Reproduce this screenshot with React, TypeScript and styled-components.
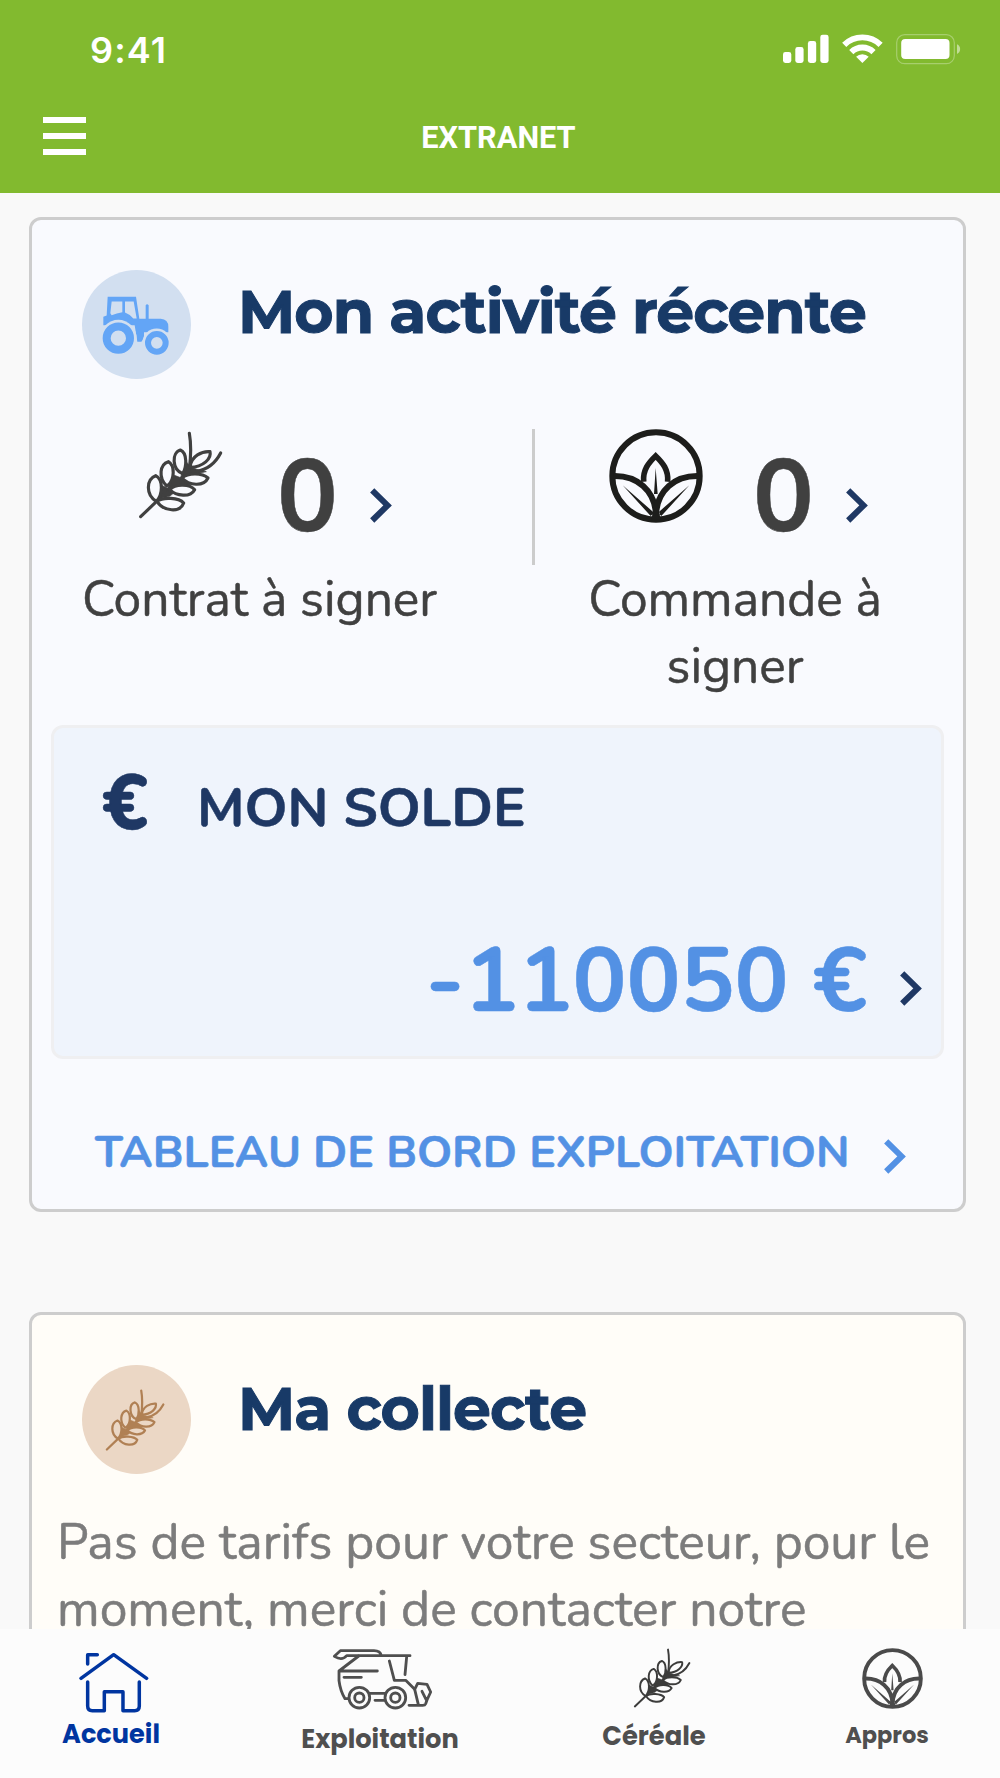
import React from "react";
import styled, { createGlobalStyle } from "styled-components";

const GlobalStyle = createGlobalStyle`
  *, *::before, *::after { box-sizing: border-box; }
  body { margin: 0; background: #f9f9f9; }
  svg { display: block; flex: none; }
`;

const rounded = `Nunito, Lato, sans-serif`;
const heading = `Montserrat, Inter, sans-serif`;
const label = `Poppins, Inter, sans-serif`;

const navy = "#1f3864";
const blue = "#5391e4";

const Screen = styled.div`
  width: 1000px;
  height: 1778px;
  display: flex;
  flex-direction: column;
  overflow: hidden;
  background: #f9f9f9;
`;

const Header = styled.header`
  flex: none;
  height: 192.5px;
  background: #82ba2f;
  color: #fff;
`;

const StatusBar = styled.div`
  display: flex;
  justify-content: space-between;
  height: 88px;
  padding: 29px 38px 0 90px;
`;

const Time = styled.span`
  font: 600 36px/43px Inter, sans-serif;
  letter-spacing: 1.1px;
`;

const StatusIcons = styled.div`
  display: flex;
  gap: 13px;
  padding-top: 5px;
`;

const AppBar = styled.div`
  display: grid;
  grid-template-columns: 1fr auto 1fr;
  height: 104px;
  padding: 29px 43px 0;
`;

const MenuButton = styled.button`
  display: flex;
  flex-direction: column;
  gap: 10px;
  width: 43px;
  padding: 0;
  border: 0;
  background: none;
`;

const MenuLine = styled.span`
  width: 43px;
  height: 6px;
  background: #fff;
`;

const AppTitle = styled.h1`
  margin: 3px 3px 0 0;
  font: 700 30.7px/36px Roboto, sans-serif;
`;

const Content = styled.main`
  flex: 1;
  min-height: 0;
  overflow: hidden;
  padding: 24.5px 34px 0 29px;
`;

const Card = styled.section<{ $bg: string; $height: number }>`
  height: ${(p) => p.$height}px;
  margin-bottom: 100px;
  border: 3px solid #cdcdcd;
  border-radius: 12px;
  background: ${(p) => p.$bg};
  -webkit-text-stroke: 0.5px currentColor;
`;

const CardHead = styled.div`
  display: flex;
  align-items: flex-start;
  height: 209px;
  padding: 50px 0 0 50px;
`;

const Badge = styled.div<{ $bg: string }>`
  flex: none;
  display: flex;
  width: 109px;
  height: 109px;
  border-radius: 50%;
  background: ${(p) => p.$bg};
`;

const CardTitle = styled.h2<{ $top: number }>`
  margin: ${(p) => p.$top}px 0 0 47px;
  font: 700 60px/70px ${heading};
  letter-spacing: -0.95px;
  -webkit-text-stroke-width: 1px;
  white-space: nowrap;
  color: #183a67;
`;

const Stats = styled.div`
  display: flex;
  height: 296px;
`;

const Divider = styled.div`
  width: 3px;
  height: 136px;
  margin-left: 43px;
  background: #cccccc;
`;

const Stat = styled.div<{ $width: number }>`
  width: ${(p) => p.$width}px;
`;

const StatFigure = styled.div<{ $left: number }>`
  display: flex;
  height: 137.5px;
  padding-left: ${(p) => p.$left}px;
`;

const StatIcon = styled.div<{ $width: number; $top?: number }>`
  width: ${(p) => p.$width}px;
  padding-top: ${(p) => p.$top ?? 0}px;
`;

const StatValue = styled.span`
  width: 93px;
  font: 700 101.5px/137px ${rounded};
  color: #404040;
`;

const ChevronSlot = styled.span<{ $top: number }>`
  padding-top: ${(p) => p.$top}px;
`;

const StatLabel = styled.div`
  padding-right: 2px;
  text-align: center;
  font: 400 49.7px/67px ${rounded};
  color: #404040;
`;

const Balance = styled.div`
  height: 334px;
  margin: 0 19px;
  padding: 25px 19.5px 0 48px;
  border: 3px solid #efeff1;
  border-radius: 12px;
  background: #eff4fc;
`;

const BalanceHead = styled.div`
  display: flex;
  height: 92px;
  color: ${navy};
`;

const Euro = styled.span`
  width: 95px;
  padding-top: 5px;
  font: 800 77px/92px ${rounded};
`;

const BalanceTitle = styled.span`
  margin-top: 22px;
  font: 700 54.7px/66px ${rounded};
`;

const BalanceRow = styled.div`
  display: flex;
  justify-content: flex-end;
  gap: 32.5px;
  margin-top: 77px;
`;

const Amount = styled.span`
  font: 700 90px/119px ${rounded};
  white-space: nowrap;
  color: ${blue};
`;

const LinkRow = styled.a`
  display: flex;
  justify-content: space-between;
  padding: 63px 57px 0 63px;
  font: 700 44.8px/61px ${rounded};
  white-space: nowrap;
  color: ${blue};
`;

const Message = styled.p`
  width: 904px;
  margin: -14px 0 0;
  padding-left: 25px;
  font: 400 49.8px/67px ${rounded};
  white-space: nowrap;
  color: #7c7c7c;
`;

const Nav = styled.nav`
  flex: none;
  display: grid;
  grid-template-columns: 222px 316px 232px 234px;
  height: 149px;
  background: #fcfcfc;
`;

const NavItem = styled.a<{ $color: string; $top: number }>`
  display: flex;
  flex-direction: column;
  align-items: center;
  padding-top: ${(p) => p.$top}px;
  color: ${(p) => p.$color};
`;

const NavIcon = styled.span<{ $inset: number }>`
  padding-left: ${(p) => p.$inset}px;
`;

const NavLabel = styled.span<{ $size: number; $top: number }>`
  margin-top: ${(p) => p.$top}px;
  font: 700 ${(p) => p.$size}px/30px ${label};
`;

const Chevron = ({ color }: { color: string }) => (
  <svg width="22" height="35" viewBox="0 0 22 35" fill="none" stroke={color} strokeWidth="6">
    <path d="M2.2 2.3 17.6 17.4 2.2 32.5" />
  </svg>
);

const Signal = () => (
  <svg width="46" height="29" viewBox="0 0 46 29" fill="#fff">
    <rect x="0" y="18" width="8.3" height="11" rx="2.4" />
    <rect x="12.3" y="13" width="8.3" height="16" rx="2.4" />
    <rect x="24.9" y="7" width="8.3" height="22" rx="2.4" />
    <rect x="37.3" y="0.7" width="8.3" height="28.3" rx="2.4" />
  </svg>
);

const Wifi = () => (
  <svg width="41" height="29" viewBox="0 0 41 29" fill="none" stroke="#fff" strokeWidth="5.9">
    <path d="M2.2 10.8a26 26 0 0 1 36.4 0" />
    <path d="M9.3 18.1a15.6 15.6 0 0 1 22.2 0" />
    <path d="M20.4 29l-6.3-6.2a8.8 8.8 0 0 1 12.6 0z" fill="#fff" stroke="none" />
  </svg>
);

const Battery = () => (
  <svg width="66" height="31" viewBox="0 0 66 31">
    <rect x="0.7" y="0.7" width="57.6" height="29" rx="8" fill="none" stroke="#fff" strokeOpacity=".3" strokeWidth="1.2" />
    <rect x="5.2" y="5" width="48.3" height="20" rx="4" fill="#fff" />
    <path d="M61 10.2a5.4 5.4 0 0 1 0 9.8z" fill="#fff" fillOpacity=".5" />
  </svg>
);

const Tractor = () => (
  <svg width="68" height="61" viewBox="248 255 204 182" fill="#63a5f6">
    <path d="M265 260H350L360 326H379V285Q383 279 388 285V326H424Q447 328 447 350V366H374V385L366 395H354L346 345H252V320L262 316Z" />
    <g fill="#d2dff0">
      <path d="M277 274H309V306Q292 309 277 315L273 309Z" />
      <path d="M317 274H343L352 325H342Q331 312 317 307Z" />
      <circle cx="297" cy="384" r="55" />
      <circle cx="412" cy="398" r="43" />
    </g>
    <path
      fillRule="evenodd"
      d="M250 384a47 47 0 1 0 94 0a47 47 0 1 0-94 0zM274 384a23 23 0 1 1 46 0a23 23 0 1 1-46 0zM377 398a35.5 35.5 0 1 0 71 0a35.5 35.5 0 1 0-71 0zM395 398a17.5 17.5 0 1 1 35 0a17.5 17.5 0 1 1-35 0z"
    />
  </svg>
);

const Wheat = ({ width, color, bg, stroke = 9.5 }: { width: number; color: string; bg: string; stroke?: number }) => (
  <svg width={width} height={(width * 265) / 255} viewBox="355 660 255 265" fill="none" stroke={color} strokeWidth={stroke} strokeLinecap="round" strokeLinejoin="round">
    <path fill={color} strokeWidth="2" d="M410 872 424 822 458 838 472 838 450 856 424 862Z" />
    <path fill={color} strokeWidth="2" d="M440 840 462 792 488 802 512 822 460 828Z" />
    <path fill={color} strokeWidth="2" d="M480 806 500 752 512 768 535 776 560 782 528 788Z" />
    <path d="M363 917 410 872" />
    <path d="M509 667Q517 712 509 774" />
    <path d="M603 726Q578 774 530 781" />
    <g fill={bg}>
      <path d="M410 871C378 852 379 805 408 794C431 806 430 850 410 871Z" />
      <path d="M440 824C416 800 420 760 446 752C467 764 464 806 446 822Z" />
      <path d="M489 788C456 776 456 724 482 717C504 726 501 770 489 788Z" />
      <path d="M412 871C430 857 478 860 492 876C482 906 432 902 412 871Z" />
      <path d="M450 836C468 817 512 820 525 836C512 860 470 856 450 836Z" />
      <path d="M487 801C504 785 548 785 565 801C552 828 508 824 487 801Z" />
      <path d="M511 769C514 734 548 720 571 722C576 742 552 768 511 769Z" />
    </g>
  </svg>
);

const Leaves = ({ size, color }: { size: number; color: string }) => (
  <svg width={size} height={size} viewBox="267 85 282 282" fill="none" stroke={color} strokeWidth="18">
    <circle cx="408" cy="226" r="131" />
    <path d="M280 226C350 224 406 268 408 345C410 268 466 224 536 226" />
    <path strokeWidth="17" d="M371 243C368 208 386 186 407 166C428 186 446 208 443 243" />
    <path fill={color} stroke="none" d="M407 202 402 280H413ZM308 254 402 336 392 346ZM508 254 414 336 424 346ZM408 290 422 356H394Z" />
  </svg>
);

const House = () => (
  <svg width="69.3" height="61" viewBox="88 68 208 183" fill="none" stroke="currentColor" strokeWidth="10.5" strokeLinecap="round" strokeLinejoin="round">
    <path d="M94 147 192 76 291 147M114 104V76H143M114 158V230Q114 244 128 244H164V187H220V244H255Q269 244 269 230V158" />
  </svg>
);

const Harvester = () => (
  <svg width="100.7" height="62" viewBox="158 54 302 186" fill="none" stroke="currentColor" strokeWidth="8.5" strokeLinecap="round" strokeLinejoin="round">
    <path d="M392 77H202C190 91 178 87 165 79L183 62H284Q303 62 306 77" />
    <path d="M238 78 179 123V152Q183 184 197 206H208M179 123H294M194 142H246" />
    <path d="M330 93 345 151H379L406 178M382 80 377 134" />
    <circle cx="240" cy="203" r="31" />
    <circle cx="240" cy="203" r="14" />
    <circle cx="348" cy="203" r="31" />
    <circle cx="348" cy="203" r="14" />
    <path d="M270 190H318M287 211H316M406 178 415 160 443 163 454 186 443 210 439 221Q437 226 430 226H389M406 178 417 224M428 184 440 208" />
  </svg>
);

const BadgeIcon = styled.div<{ $x: number; $y: number }>`
  padding: ${(p) => p.$y}px 0 0 ${(p) => p.$x}px;
`;

export default function App() {
  return (
    <>
      <GlobalStyle />
      <Screen>
        <Header>
          <StatusBar>
            <Time>9:41</Time>
            <StatusIcons>
              <Signal />
              <Wifi />
              <Battery />
            </StatusIcons>
          </StatusBar>
          <AppBar>
            <MenuButton aria-label="Menu">
              <MenuLine />
              <MenuLine />
              <MenuLine />
            </MenuButton>
            <AppTitle>EXTRANET</AppTitle>
          </AppBar>
        </Header>

        <Content>
          <Card $bg="#f9fafe" $height={995}>
            <CardHead>
              <Badge $bg="#d2dff0">
                <BadgeIcon $x={20} $y={24.5}>
                  <Tractor />
                </BadgeIcon>
              </Badge>
              <CardTitle $top={7}>Mon activité récente</CardTitle>
            </CardHead>

            <Stats>
              <Stat $width={457}>
                <StatFigure $left={106}>
                  <StatIcon $width={139} $top={1.5}>
                    <Wheat width={85} color="#404040" bg="#f9fafe" />
                  </StatIcon>
                  <StatValue>0</StatValue>
                  <ChevronSlot $top={59}>
                    <Chevron color={navy} />
                  </ChevronSlot>
                </StatFigure>
                <StatLabel>Contrat à signer</StatLabel>
              </Stat>
              <Divider />
              <Stat $width={402}>
                <StatFigure $left={74}>
                  <StatIcon $width={144}>
                    <Leaves size={94} color="#1d1d1b" />
                  </StatIcon>
                  <StatValue>0</StatValue>
                  <ChevronSlot $top={59}>
                    <Chevron color={navy} />
                  </ChevronSlot>
                </StatFigure>
                <StatLabel>
                  Commande à<br />
                  signer
                </StatLabel>
              </Stat>
            </Stats>

            <Balance>
              <BalanceHead>
                <Euro>€</Euro>
                <BalanceTitle>MON SOLDE</BalanceTitle>
              </BalanceHead>
              <BalanceRow>
                <Amount>-110050 €</Amount>
                <ChevronSlot $top={49}>
                  <Chevron color={navy} />
                </ChevronSlot>
              </BalanceRow>
            </Balance>

            <LinkRow>
              TABLEAU DE BORD EXPLOITATION
              <ChevronSlot $top={16.5}>
                <Chevron color={blue} />
              </ChevronSlot>
            </LinkRow>
          </Card>

          <Card $bg="#fffdf8" $height={600}>
            <CardHead>
              <Badge $bg="#ebd7c5">
                <BadgeIcon $x={23} $y={24}>
                  <Wheat width={60} color="#b08054" bg="#ebd7c5" />
                </BadgeIcon>
              </Badge>
              <CardTitle $top={8.5}>Ma collecte</CardTitle>
            </CardHead>
            <Message>
              Pas de tarifs pour votre secteur, pour le
              <br />
              moment, merci de contacter notre
            </Message>
          </Card>
        </Content>

        <Nav>
          <NavItem $color="#0035a0" $top={23}>
            <NavIcon $inset={6}>
              <House />
            </NavIcon>
            <NavLabel $size={25.6} $top={6}>Accueil</NavLabel>
          </NavItem>
          <NavItem $color="#4f4f4f" $top={19}>
            <NavIcon $inset={5.5}>
              <Harvester />
            </NavIcon>
            <NavLabel $size={25.7} $top={14}>Exploitation</NavLabel>
          </NavItem>
          <NavItem $color="#4f4f4f" $top={19}>
            <NavIcon $inset={16}>
              <Wheat width={58} color="#3c3c3b" bg="#fcfcfc" stroke={8.5} />
            </NavIcon>
            <NavLabel $size={25.8} $top={13}>Céréale</NavLabel>
          </NavItem>
          <NavItem $color="#4f4f4f" $top={19}>
            <NavIcon $inset={10}>
              <Leaves size={61} color="#4a4a4a" />
            </NavIcon>
            <NavLabel $size={22.5} $top={11}>Appros</NavLabel>
          </NavItem>
        </Nav>
      </Screen>
    </>
  );
}
